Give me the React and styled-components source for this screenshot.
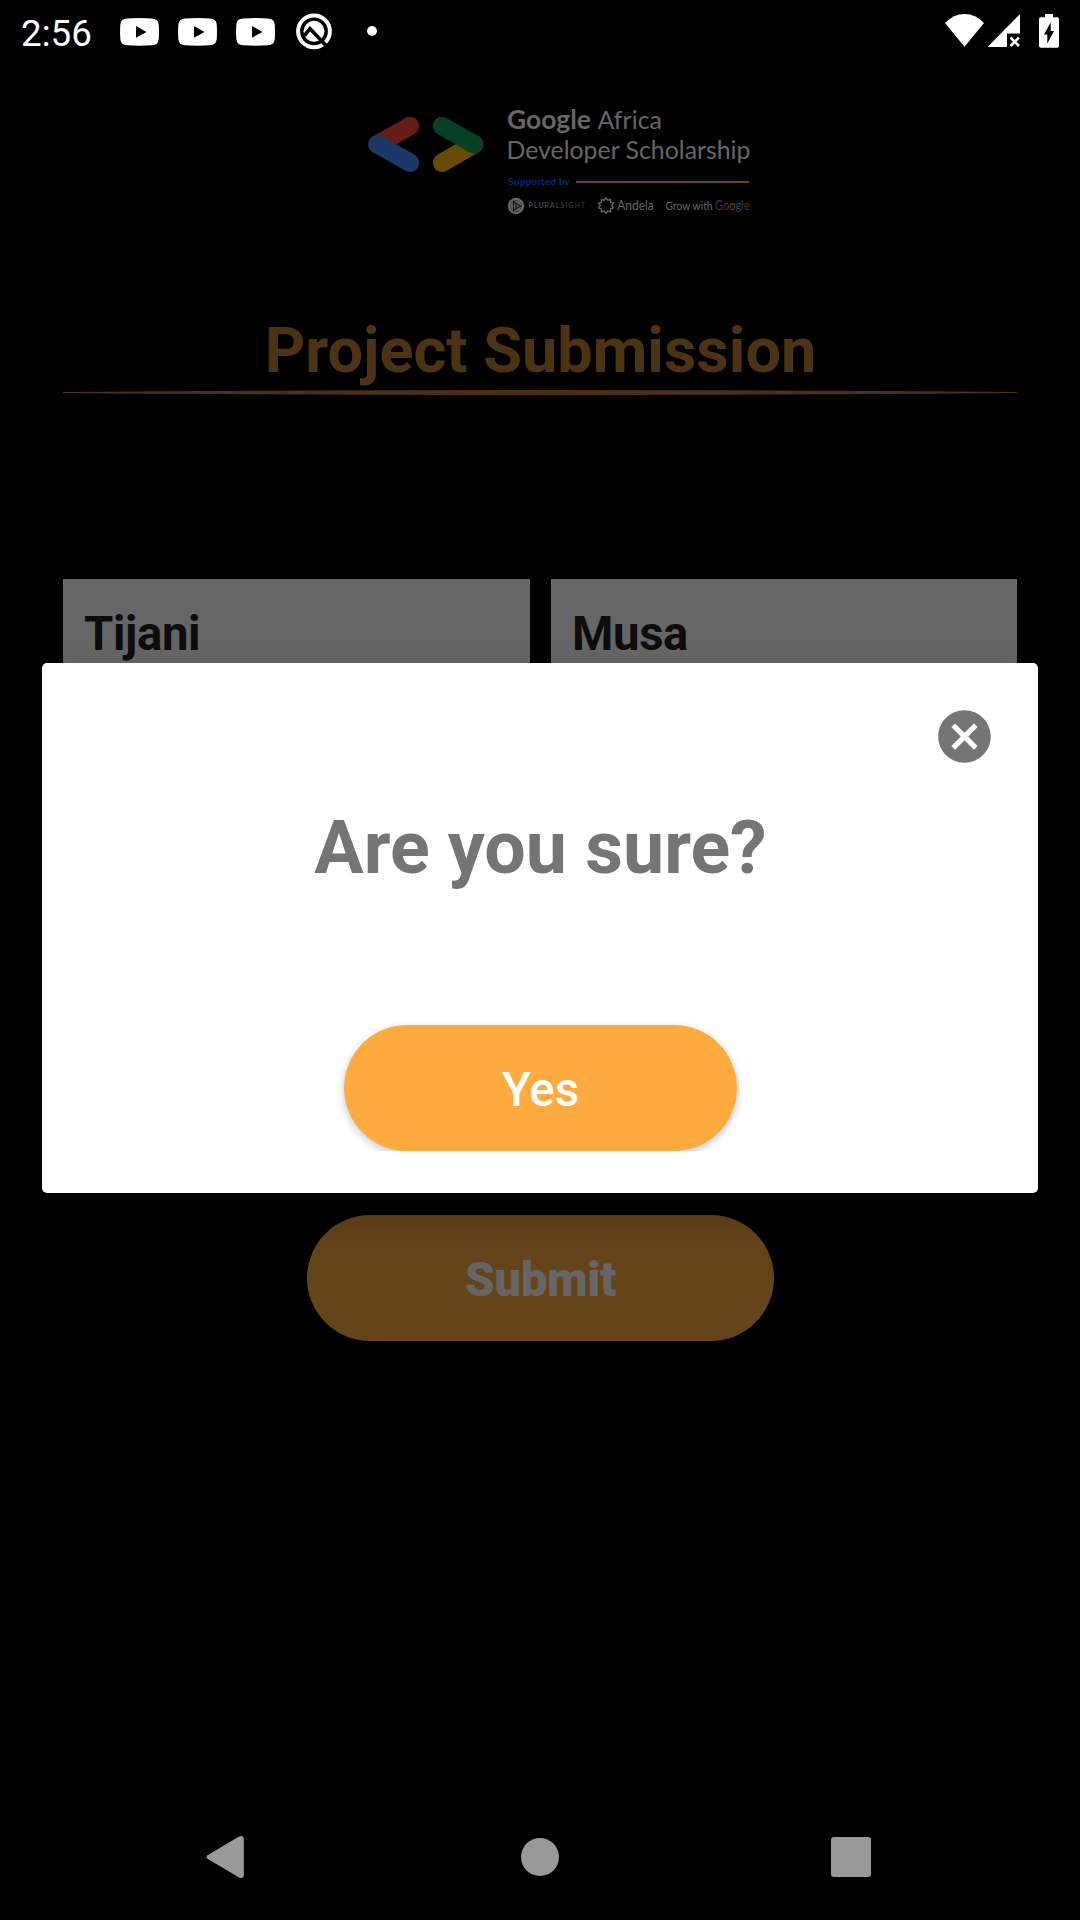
import React from "react";
import styled, { createGlobalStyle } from "styled-components";

const GlobalStyle = createGlobalStyle`
  * { box-sizing: border-box; }
  html, body { margin: 0; padding: 0; background: #000; }
  body { font-family: Roboto, "Noto Sans", sans-serif; }
  button { border: 0; font-family: inherit; }
  svg { display: block; flex: none; }
`;

const Screen = styled.div`
  position: relative;
  display: flex;
  flex-direction: column;
  width: 1080px;
  height: 1920px;
  overflow: hidden;
  background: #000;
`;

const StatusBar = styled.header`
  display: flex;
  justify-content: space-between;
  height: 63px;
  padding: 0 21px;
  color: #fff;
`;

const StatusGroup = styled.div`
  display: flex;
  align-items: flex-start;
`;

const Clock = styled.time`
  width: 99px;
  font-size: 36.75px;
  line-height: 67px;
`;

const Page = styled.main`
  display: flex;
  flex: 1;
  flex-direction: column;
  align-items: center;
  padding: 37px 63px 0;
`;

const Title = styled.h1`
  margin: 83px 0 0;
  height: 77px;
  padding-left: 1px;
  color: #4c3313;
  font-size: 63px;
  font-weight: 700;
  line-height: 75px;
`;

const FieldRow = styled.div`
  display: grid;
  grid-template-columns: 467px 466px;
  gap: 21px;
  width: 954px;
  margin-top: 184px;
`;

const Field = styled.div`
  height: 110px;
  padding: 0 21px;
  background: #666;
  color: #0d0d0d;
  font-size: 47.25px;
  font-weight: 700;
  letter-spacing: -0.35px;
  line-height: 110px;
`;

const PillButton = styled.button`
  display: flex;
  align-items: center;
  justify-content: center;
  width: ${(p) => p.$width}px;
  height: 126px;
  padding: 3px 0 0 1px;
  border-radius: 63px;
  background: ${(p) => p.$fill};
  color: ${(p) => p.$ink};
  font-size: 47.25px;
  font-weight: ${(p) => p.$weight};
  letter-spacing: ${(p) => p.$tracking || 0}px;
  box-shadow: ${(p) => (p.$raised ? "0 3px 8px rgba(0, 0, 0, 0.22)" : "none")};
`;

const SubmitArea = styled.div`
  margin-top: 526px;
`;

const NavBar = styled.nav`
  display: grid;
  grid-template-columns: 311px 311px 311px;
  justify-content: center;
  justify-items: center;
  align-items: center;
  height: 126px;
`;

const Dialog = styled.section`
  position: absolute;
  top: 663px;
  left: 42px;
  display: flex;
  flex-direction: column;
  align-items: center;
  width: 996px;
  height: 530px;
  padding: 42px;
  border-radius: 5px;
  background: #fff;
  box-shadow: 0 26px 50px rgba(0, 0, 0, 0.22);
`;

const CloseButton = styled.button`
  align-self: flex-end;
  width: 63px;
  height: 63px;
  padding: 0;
  background: none;
`;

const Question = styled.h2`
  margin: 37px 0 0;
  height: 86px;
  padding-left: 1px;
  color: #757575;
  font-size: 73.5px;
  font-weight: 700;
  line-height: 86px;
`;

const ConfirmArea = styled.div`
  display: flex;
  justify-content: center;
  width: 100%;
  margin-top: 134px;
  clip-path: inset(-10px 0 0 0);
`;

function YouTubeIcon() {
  return (
    <svg width="58" height="63" viewBox="0 0 58 63">
      <path
        fill="#fff"
        d="M7 18.4Q19.500 17.600 32 18.400Q38 18.700 38.700 24Q39.300 31.700 38.700 39.500Q38 45 32 45.300Q19.500 46 7 45.300Q1 45 .4 39.500Q-.3 31.700 .4 24Q1 18.700 7 18.400Z"
      />
      <path fill="#000" d="M16 26v11.700l10.500-5.800z" />
    </svg>
  );
}

function QIcon() {
  return (
    <svg width="72" height="63" viewBox="0 0 72 63">
      <circle cx="20" cy="31.300" r="15.900" fill="none" stroke="#fff" strokeWidth="4" />
      <circle cx="20" cy="31.300" r="10.500" fill="#fff" />
      <path
        d="M10.500 35.500L16 28.800L33 46.500"
        fill="none"
        stroke="#000"
        strokeWidth="3.600"
        strokeLinejoin="miter"
      />
    </svg>
  );
}

function MoreDot() {
  return (
    <svg width="12" height="63" viewBox="0 0 12 63">
      <circle cx="6" cy="31" r="5" fill="#fff" />
    </svg>
  );
}

function WifiIcon() {
  return (
    <svg width="43" height="63" viewBox="945 0 43 63">
      <path fill="#fff" d="M945 23Q953.500 14 964.500 14T984 23L964.500 46.800Z" />
    </svg>
  );
}

function SignalIcon() {
  return (
    <svg width="51" height="63" viewBox="988 0 51 63">
      <path fill="#fff" d="M1020 14V33.500H1007V47H987.500Z" />
      <path stroke="#fff" strokeWidth="2.500" d="M1010.500 37.500l8.500 8.500M1019 37.500l-8.500 8.500" />
    </svg>
  );
}

function BatteryIcon() {
  return (
    <svg width="20" height="63" viewBox="1039 0 20 63">
      <path
        fill="#fff"
        d="M1045 14h8v3.300h4.200q1.800 0 1.800 1.800V46q0 1.800-1.800 1.800h-16.400q-1.800 0-1.800-1.800V19.100q0-1.800 1.800-1.800h4.200z"
      />
      <path fill="#000" d="M1050.700 22.500V31h3.300l-6.700 12.500V34.500h-3.300z" />
    </svg>
  );
}

const LOGO_FONT = 'Lato, "Noto Sans", sans-serif';

function LogoText({ x, y, w, size, weight = 400, fill = "#666", adjust = "spacingAndGlyphs", children }) {
  return (
    <text
      x={x}
      y={y}
      textLength={w}
      lengthAdjust={adjust}
      fontFamily={LOGO_FONT}
      fontSize={size}
      fontWeight={weight}
      fill={fill}
    >
      {children}
    </text>
  );
}

function ScholarshipLogo() {
  const points = Array.from({ length: 10 }, (_, i) => {
    const a = (i * Math.PI) / 5 - Math.PI / 2;
    const b = a + Math.PI / 10;
    return `${606 + 7.8 * Math.cos(a)},${205.6 + 7.8 * Math.sin(a)} ${606 + 5.7 * Math.cos(b)},${205.6 + 5.7 * Math.sin(b)}`;
  }).join(" ");
  return (
    <svg width="450" height="130" viewBox="315 100 450 130">
      <defs>
        <linearGradient id="fade" gradientUnits="userSpaceOnUse" x1="529" y1="0" x2="586" y2="0">
          <stop offset="0" stopColor="#666" />
          <stop offset="1" stopColor="#383838" />
        </linearGradient>
      </defs>
      <g strokeWidth="18.500" strokeLinecap="round">
        <path stroke="#661c18" d="M377.500 144.300L410 126" />
        <path stroke="#1b3868" d="M377.500 144.300L410 162.800" />
        <path stroke="#664b00" d="M442 162.800L474 144.300" />
        <path stroke="#054023" d="M442 126L474 144.300" />
      </g>
      <LogoText x={507} y={128.800} w={84} size={25.800} weight={700}>Google</LogoText>
      <LogoText x={597.500} y={128.800} w={64.500} size={25.800}>Africa</LogoText>
      <LogoText x={506.500} y={159.200} w={244} size={25.800}>Developer Scholarship</LogoText>
      <LogoText x={508.300} y={185} w={61.500} size={9.600} weight={700} fill="#06296a">Supported by</LogoText>
      <path stroke="#6b460d" strokeWidth="2" d="M576 182H749" />
      <circle cx="516" cy="206" r="8.200" fill="#666" />
      <circle cx="516" cy="206" r="5.600" fill="none" stroke="#333" strokeWidth=".8" />
      <path fill="none" stroke="#111" strokeWidth="1.200" d="M513.500 201.500v9l7-4.500zM516 203v6" />
      <LogoText x={528.600} y={208.200} w={56.500} size={6.800} fill="url(#fade)" adjust="spacing">
        PLURALSIGHT
      </LogoText>
      <polygon points={points} fill="none" stroke="#666" strokeWidth="1.300" />
      <LogoText x={617.200} y={210} w={36.600} size={13}>Andela</LogoText>
      <LogoText x={665.600} y={210} w={47} size={12}>Grow with</LogoText>
      <LogoText x={715} y={210} w={34.500} size={12.600}>
        <tspan fill="#1f4079">G</tspan>
        <tspan fill="#6b211c">o</tspan>
        <tspan fill="#6b5000">o</tspan>
        <tspan fill="#1f4079">g</tspan>
        <tspan fill="#15532a">l</tspan>
        <tspan fill="#6b211c">e</tspan>
      </LogoText>
    </svg>
  );
}

function TitleRule() {
  return (
    <svg width="954" height="5" viewBox="0 0 954 5">
      <path fill="#4a3113" d="M0 1.900V3.100Q220 5 477 5T954 3.100V1.900Q734 0 477 0T0 1.900Z" />
    </svg>
  );
}

function CancelIcon() {
  return (
    <svg width="63" height="63" viewBox="0 0 24 24" fill="#757575">
      <path d="M12 2C6.470 2 2 6.470 2 12s4.470 10 10 10 10-4.470 10-10S17.530 2 12 2zm5 13.590L15.590 17 12 13.410 8.410 17 7 15.590 10.590 12 7 8.410 8.410 7 12 10.590 15.590 7 17 8.410 13.410 12 17 15.590z" />
    </svg>
  );
}

function NavIcon({ children }) {
  return (
    <svg width="60" height="60" viewBox="-30 -30 60 60" fill="#999">
      {children}
    </svg>
  );
}

export default function App() {
  return (
    <Screen>
      <GlobalStyle />
      <StatusBar>
        <StatusGroup>
          <Clock>2:56</Clock>
          <YouTubeIcon />
          <YouTubeIcon />
          <YouTubeIcon />
          <QIcon />
          <MoreDot />
        </StatusGroup>
        <StatusGroup>
          <WifiIcon />
          <SignalIcon />
          <BatteryIcon />
        </StatusGroup>
      </StatusBar>
      <Page>
        <ScholarshipLogo />
        <Title>Project Submission</Title>
        <TitleRule />
        <FieldRow>
          <Field>Tijani</Field>
          <Field>Musa</Field>
        </FieldRow>
        <SubmitArea>
          <PillButton $width={467} $fill="#66441a" $ink="#666" $weight={900} $tracking={-0.3}>
            Submit
          </PillButton>
        </SubmitArea>
      </Page>
      <NavBar>
        <NavIcon>
          <path d="M-21.500-1.800L10-20.400Q14.500-22.500 14.800-18V18Q14.500 22.500 10 20.400L-21.500 1.800Q-23.500 0-21.500-1.800Z" />
        </NavIcon>
        <NavIcon>
          <circle r="19" />
        </NavIcon>
        <NavIcon>
          <rect x="-20" y="-20" width="40" height="40" rx="3" />
        </NavIcon>
      </NavBar>
      <Dialog role="dialog">
        <CloseButton aria-label="Close">
          <CancelIcon />
        </CloseButton>
        <Question>Are you sure?</Question>
        <ConfirmArea>
          <PillButton $width={393} $fill="#ffab40" $ink="#fff" $weight={500} $raised>
            Yes
          </PillButton>
        </ConfirmArea>
      </Dialog>
    </Screen>
  );
}
